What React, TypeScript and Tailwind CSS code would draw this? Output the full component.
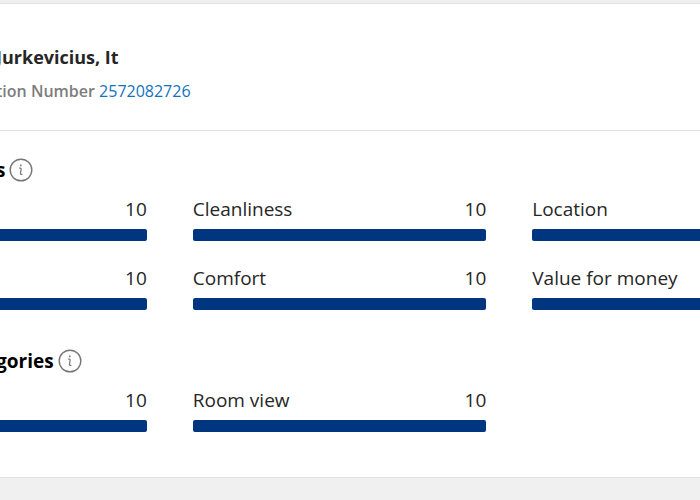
import React from 'react';

interface Score {
  label?: string;
  value?: number;
}

const scores: Score[] = [
  { value: 10 },
  { label: 'Cleanliness', value: 10 },
  { label: 'Location' },
  { value: 10 },
  { label: 'Comfort', value: 10 },
  { label: 'Value for money' },
];

const categories: Score[] = [
  { value: 10 },
  { label: 'Room view', value: 10 },
];

const InfoIcon: React.FC = () => (
  <svg className="w-6 h-6 shrink-0" viewBox="0 0 24 24" fill="none" stroke="#777777" aria-hidden="true">
    <circle cx="12" cy="12" r="10.8" strokeWidth="1.4" />
    <path d="M11.8 6.4v1.8" strokeWidth="1.5" />
    <path d="M10.2 10.2h1.1c.6 0 .9.3.8.9l-.6 4.2c-.1.7.2 1.1.9 1.1h1" strokeWidth="1.2" />
  </svg>
);

const ScoreItem: React.FC<{ score: Score }> = ({ score }) => {
  const barStyle = !score.label ? 'rounded-r-xs' : score.value === undefined ? 'rounded-l-xs' : 'rounded-xs';

  return (
    <div>
      <div className="flex justify-between h-8 text-[19px] leading-6 text-[#262626] whitespace-nowrap">
        <span>{score.label}</span>
        <span>{score.value}</span>
      </div>
      <div className={`h-3 bg-[#003580] ${barStyle}`} />
    </div>
  );
};

const ScoreSection: React.FC<{ title: string; items: Score[] }> = ({ title, items }) => (
  <section>
    <h2 className="flex items-center gap-1 h-6 -ml-1 text-[19px] leading-6 font-bold text-black">
      {title}
      <InfoIcon />
    </h2>
    <div className="grid grid-cols-[147fr_294fr_168fr] gap-x-[46px] gap-y-[25px] mt-[15px]">
      {items.map((score, index) => (
        <ScoreItem key={index} score={score} />
      ))}
    </div>
  </section>
);

export default function App() {
  return (
    <div className="min-h-screen bg-[#f0f0f0] pt-[3px] overflow-hidden font-['Open_Sans','Noto_Sans',sans-serif]">
      <main className="bg-white border-y border-[#e2e2e2] pb-[45px]">
        <header className="pt-[39px] pb-[27px] border-b border-[#e2e2e2]">
          <h1 className="-ml-1 text-lg leading-7 font-bold text-[#262626]">Jurkevicius, It</h1>
          <p className="-ml-1 mt-2 text-base leading-6 font-semibold text-[#7d7d7d]">
            tion Number{' '}
            <a href="#reservation" className="font-normal text-[#1471bd]">2572082726</a>
          </p>
        </header>
        <div className="flex flex-col gap-[39px] pt-[27px]">
          <ScoreSection title="s" items={scores} />
          <ScoreSection title="gories" items={categories} />
        </div>
      </main>
    </div>
  );
}
